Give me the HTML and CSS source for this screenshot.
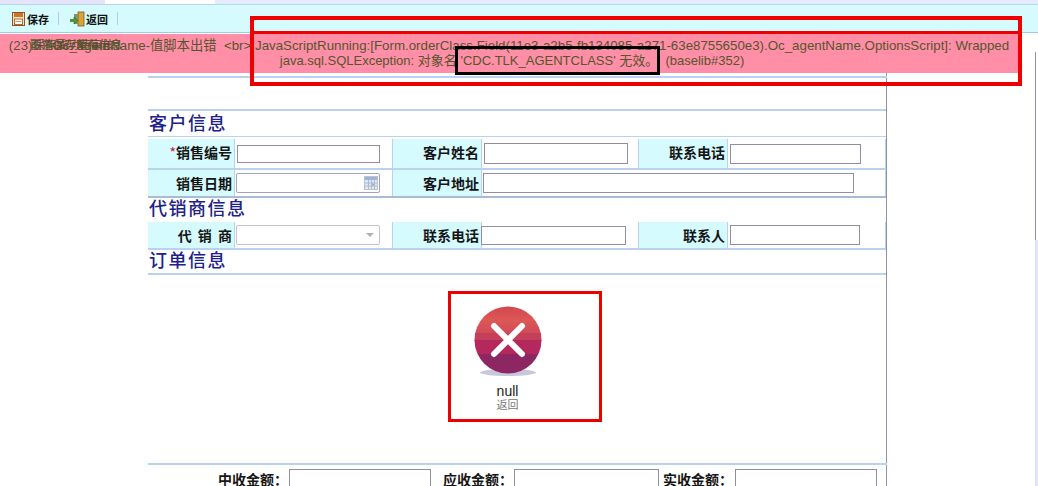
FILE: index.html
```html
<!DOCTYPE html>
<html lang="zh-CN">
<head>
<meta charset="utf-8">
<title>销售单</title>
<link rel="stylesheet" href="styles.css">
</head>
<body>
<div class="page">
  <div class="tabs"><span class="tab-a"></span><span class="tab-b"></span><span class="tab-c"></span></div>
  <div class="toolbar">
    <span class="tool">
      <svg class="ico" width="13" height="14" viewBox="0 0 13 14"><rect x=".5" y=".5" width="12" height="13" fill="#f6e3c8" stroke="#96501c"/><rect x="2" y="1" width="9" height="4" fill="#c8762c"/><rect x="2.5" y="7" width="8" height="5.5" fill="#fff" stroke="#b06a2c"/><rect x="3.5" y="9" width="6" height="1" fill="#c89a70"/></svg>
      <b>保存</b>
    </span>
    <span class="sep"></span>
    <span class="tool back">
      <svg class="ico" width="15" height="16" viewBox="0 0 15 16"><rect x="8" y="1" width="6" height="14" fill="#d8a23c" stroke="#7c5a20" stroke-width=".8"/><rect x="4" y="3" width="4" height="10" fill="#8a8f70"/><path d="M0 8.5h4V6l4 3.5-4 3.5v-2.500H0z" fill="#4f9a34" stroke="#2d6a1e" stroke-width=".6"/></svg>
      <b>返回</b>
    </span>
    <span class="sep"></span>
  </div>

  <div class="workspace">
    <main class="form">
      <div class="rule-top"></div>
      <h2 class="title first">客户信息</h2>
      <div class="row r1">
        <label class="lab"><i>*</i>销售编号</label>
        <div class="val"><input class="in i1"></div>
        <label class="lab">客户姓名</label>
        <div class="val"><input class="in i2"></div>
        <label class="lab">联系电话</label>
        <div class="val"><input class="in i3"></div>
      </div>
      <div class="row r2">
        <label class="lab">销售日期</label>
        <div class="val">
          <span class="in i4 field">
            <svg width="14" height="14" viewBox="0 0 14 14"><rect x=".5" y=".5" width="13" height="13" fill="#dfe8f4" stroke="#b4c4da"/><rect x="1" y="1" width="12" height="3" fill="#9db4d2"/><path d="M1 7h12M1 10h12M4.500 4v9M7.500 4v9M10.500 4v9" stroke="#a9bcd6"/><rect x="8" y="7.500" width="2" height="2" fill="#e2a070"/></svg>
          </span>
        </div>
        <label class="lab">客户地址</label>
        <div class="val wide"><input class="in i5"></div>
      </div>
      <h2 class="title">代销商信息</h2>
      <div class="row r3">
        <label class="lab spaced">代 销 商</label>
        <div class="val"><span class="in i4 field sel"><span class="arrow"></span></span></div>
        <label class="lab">联系电话</label>
        <div class="val"><input class="in i6"></div>
        <label class="lab">联系人</label>
        <div class="val"><input class="in i7"></div>
      </div>
      <h2 class="title third">订单信息</h2>
      <section class="empty">
        <svg class="err" width="70" height="72" viewBox="0 0 70 72">
          <defs>
            <clipPath id="disc"><circle cx="35" cy="34" r="33.500"/></clipPath>
            <linearGradient id="topband" x1="0" y1="0" x2="0" y2="1"><stop offset="0" stop-color="#d4454e"/><stop offset=".5" stop-color="#dc5856"/><stop offset="1" stop-color="#d04a58"/></linearGradient>
          </defs>
          <ellipse cx="35" cy="66.500" rx="28" ry="3.500" fill="#c8c8dc"/>
          <g clip-path="url(#disc)">
            <rect width="70" height="28" fill="url(#topband)"/>
            <rect y="27" width="70" height="8" fill="#c4405a"/>
            <rect y="34" width="70" height="15" fill="#b5285e"/>
            <rect y="48" width="70" height="22" fill="#8c2763"/>
          </g>
          <path d="M21 20l28 28M49 20L21 48" stroke="#fff" stroke-width="6" stroke-linecap="round"/>
        </svg>
        <div class="null">null</div>
        <div class="ret">返回</div>
      </section>
      <div class="totals">
        <label class="tl">中收金额：</label><input class="in t1">
        <label class="tl">应收金额：</label><input class="in t2">
        <label class="tl">实收金额：</label><input class="in t3">
      </div>
    </main>
    <aside class="side"><div class="side-line"></div><div class="side-fill"></div></aside>
  </div>

  <div class="message">
    <span class="ghost g1">取消保存暂存信息</span>
    <span class="ghost g2">正在保存草稿信息</span>
    <span class="ghost g3">保存成功待审核</span>
    <span class="count">(23)</span>Oc_agentName-值脚本出错&nbsp; &lt;br&gt; JavaScriptRunning:[Form.orderClass.Field(11e3-a2b5-fb134085-a271-63e8755650e3).Oc_agentName.OptionsScript]: Wrapped<br><span class="second">java.sql.SQLException: 对象名 'CDC.TLK_AGENTCLASS' 无效。&nbsp; (baselib#352)</span>
  </div>

  <div class="mark mark-big"></div>
  <div class="mark mark-line"></div>
  <div class="mark mark-black"></div>
  <div class="mark mark-icon"></div>
</div>
</body>
</html>
```

FILE: styles.css
```css
* { box-sizing: border-box; }
html, body { margin: 0; padding: 0; background: #fff; }
body { font-family: "Liberation Sans", "Noto Sans CJK SC", sans-serif; color: #111; }
.page { position: relative; width: 1038px; height: 486px; overflow: hidden; }

.tabs { display: flex; height: 5px; border-bottom: 1px solid #b9d4ec; }
.tab-a { width: 105px; background: #e4e4fa; }
.tab-b { width: 110px; background: #fff; }
.tab-c { flex: 1; background: #e4ecfa; }

.toolbar { display: flex; align-items: center; height: 28px; padding-left: 12px; background: #d6fbff; border-bottom: 1px solid #a9c6e4; }
.tool { display: flex; align-items: center; gap: 2px; font-size: 11px; color: #111; }
.tool b { font-family: "Noto Sans CJK SC", sans-serif; font-weight: 700; }
.sep { width: 1px; height: 13px; margin: 0 11px 0 9px; background: #b5ccd6; }
.back { gap: 1px; }

.workspace { display: flex; height: 453px; }
.form { width: 739px; margin-left: 148px; padding-top: 43px; border-right: 1px solid #8a94aa; }
.rule-top { height: 2px; margin-right: -1px; background: #b8d2f0; }
.title { height: 24px; margin: 0; padding-left: 1px; font: 500 18px/18px "Noto Sans CJK SC", sans-serif; letter-spacing: 1.500px; color: #20208a; }
.title.first { margin-top: 31px; height: 28px; border-top: 2px solid #b8d2f0; border-bottom: 1px solid #b8d2f0; line-height: 23px; }
.title.third { height: 25px; border-bottom: 2px solid #b8d2f0; line-height: 19px; }

.row { display: grid; grid-template-columns: 86px 159px 88px 158px 88px 1fr; border-bottom: 2px solid #b8d2f0; }
.r1 { height: 31px; margin-top: 2px; }
.r2 { height: 28px; border-bottom: 2px solid #a9bbd6; }
.r3 { height: 28px; }
.lab { display: block; padding-right: 2px; text-align: right; font: 700 14px/26px "Noto Sans CJK SC", sans-serif; color: #151515; background: #d6fbff; }
.lab i { color: #c02030; font-style: normal; font-weight: 400; }
.spaced { word-spacing: 3px; }
.val { display: flex; align-items: center; padding-left: 2px; border-left: 1px solid #b8d2f0; border-right: 1px solid #b8d2f0; background: #fff; }
.wide { grid-column: span 3; }
.in { display: block; padding: 0; background: #fff; border: 1px solid #8f8f9f; border-radius: 0; outline: 0; }
.i1 { width: 143px; height: 18px; }
.i2 { width: 144px; height: 21px; }
.i3 { width: 131px; height: 20px; }
.i4 { width: 144px; height: 20px; margin-left: -1px; }
.i5 { width: 371px; height: 20px; margin-left: -1px; }
.i6 { width: 145px; height: 19px; margin-left: -3px; }
.i7 { width: 130px; height: 20px; }
.field { display: flex; align-items: center; justify-content: flex-end; padding-right: 1px; border-color: #a5a5b2; border-radius: 2px; }
.sel { padding-right: 3px; border-color: #c6c6c6; }
.arrow { width: 0; height: 0; margin-right: 2px; border-left: 4px solid transparent; border-right: 4px solid transparent; border-top: 4px solid #b0b0b0; }

.empty { display: flex; flex-direction: column; align-items: center; height: 190px; padding: 31px 20px 0 0; border-bottom: 2px solid #b8d2f0; margin-right: -1px; }
.err { display: block; flex: none; }
.null { margin-top: 6px; font-size: 14px; line-height: 14px; color: #222; }
.ret { margin-top: 1px; font-size: 11px; line-height: 13px; color: #777; }

.totals { display: flex; align-items: flex-start; padding: 4px 0 0 70px; }
.tl { flex: none; width: 70px; font: 700 14px/21px "Noto Sans CJK SC", sans-serif; color: #151515; }
.t1, .t2, .t3 { flex: none; height: 30px; }
.t1 { width: 142px; margin: 0 12px 0 1px; }
.t2 { width: 145px; margin: 0 4px 0 1px; }
.t3 { width: 142px; margin-left: 2px; }

.side { display: flex; flex-direction: column; width: 3px; margin-left: auto; padding-top: 19px; }
.side-line { height: 188px; border-left: 1px solid #8a94aa; }
.side-fill { flex: 1; background: #e2e2fa; }

.message { position: absolute; left: 0; top: 34px; width: 1018px; height: 39px; padding: 4px 0 0 0; background: #ff8ea6; color: #55552e; font-size: 13.300px; line-height: 15px; text-align: center; white-space: nowrap; }
.count { margin-right: 20px; }
.second { margin-left: 6px; font-size: 13px; }
.ghost { position: absolute; top: 4px; font-size: 11.500px; white-space: nowrap; }
.g1 { left: 30px; color: #47642c; }
.g2 { left: 30px; color: #5a5a2c; }
.g3 { left: 33px; color: #5b4a35; }

.mark { position: absolute; pointer-events: none; }
.mark-big { left: 250px; top: 16px; width: 772px; height: 70px; border: 4px solid #ee0000; }
.mark-line { left: 250px; top: 31px; width: 772px; height: 3px; background: #ee0000; }
.mark-black { left: 455px; top: 46px; width: 205px; height: 29px; border: 3px solid #000; }
.mark-icon { left: 448px; top: 291px; width: 154px; height: 131px; border: 3px solid #ee0000; }
```
